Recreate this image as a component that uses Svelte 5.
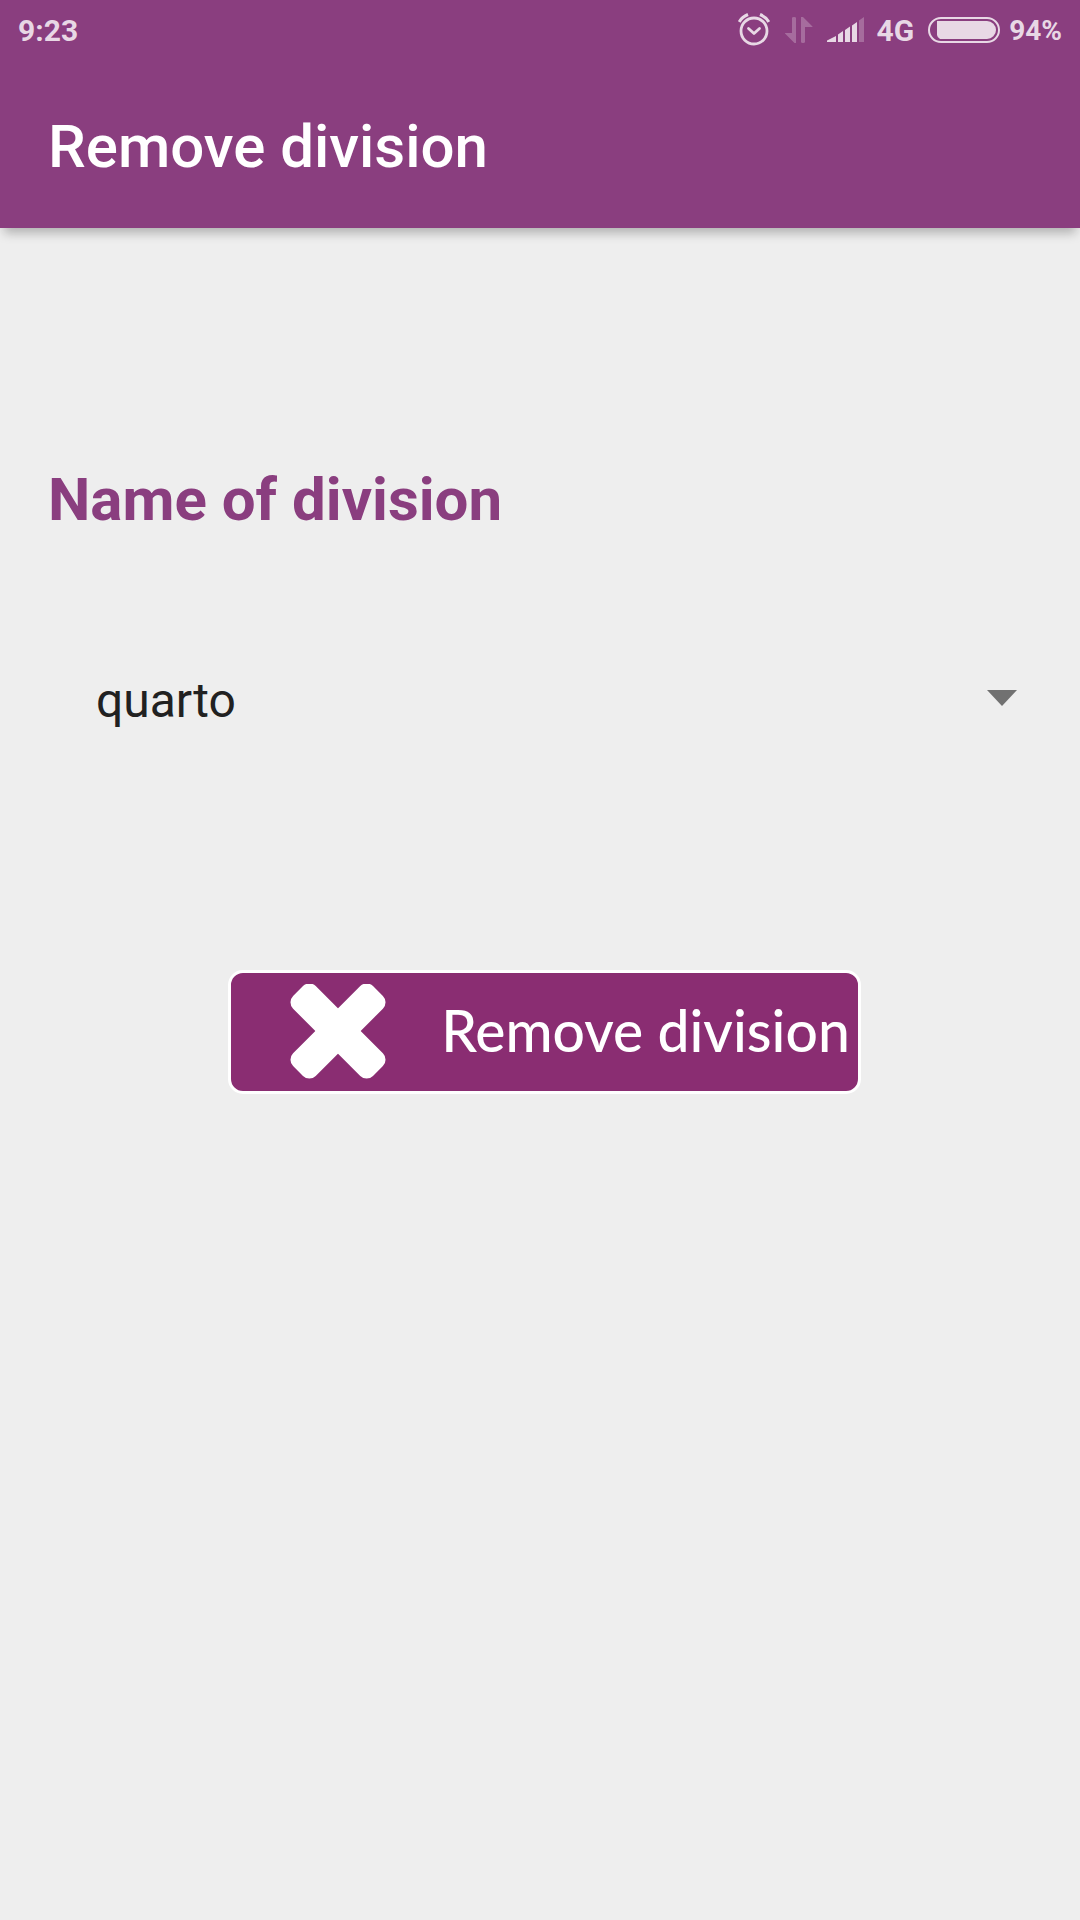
<script>
  let divisions = $state(['quarto']);
  let selected = $state('quarto');

  function removeDivision() {
    divisions = divisions.filter((name) => name !== selected);
    selected = divisions[0] ?? '';
  }
</script>

<div class="screen">
  <header>
    <div class="status">
      <span class="time">9:23</span>
      <div class="indicators">
        <svg class="alarm" width="32" height="34" viewBox="0 0 32 34" fill="none" stroke="currentColor" aria-hidden="true">
          <circle cx="16" cy="18" r="13" stroke-width="2.8" />
          <path d="M10.500 15.500L16 20.500L21.500 15.500" stroke-width="2.8" stroke-linecap="round" stroke-linejoin="round" />
          <path d="M1.200 9Q4 4 10 1.600M30.800 9Q28 4 22 1.600" stroke-width="3.200" />
        </svg>
        <svg class="data" width="28" height="28" viewBox="0 0 28 28" fill="currentColor" aria-hidden="true">
          <path d="M7 2Q7 1 9 1T11 2V27H9.500L0 17.500V17H7ZM16 1H18L27.500 10.500V11H20V26Q20 27 18 27T16 26Z" />
        </svg>
        <svg class="signal" width="38" height="26" viewBox="0 0 38 26" fill="currentColor" aria-hidden="true">
          <path d="M0 25V23.500L9 19V25ZM11 17.500L16 14V25H11ZM18 13L23 9.500V25H18ZM25 8.500L30 5V25H25Z" />
          <path d="M32 3.500L37 0V25H32Z" opacity=".3" />
        </svg>
        <span class="network">4G</span>
        <svg class="battery" width="72" height="26" viewBox="0 0 72 26" aria-hidden="true">
          <rect x="1" y="1" width="70" height="24" rx="12" fill="none" stroke="currentColor" stroke-width="2" />
          <path d="M9 4H59A9 9 0 0 1 59 22H12Q9 20 9 18Z" fill="currentColor" />
        </svg>
        <span class="percent">94%</span>
      </div>
    </div>
    <h1>Remove division</h1>
  </header>

  <main>
    <label for="division">Name of division</label>
    <div class="picker">
      <select id="division" bind:value={selected}>
        {#each divisions as name}
          <option value={name}>{name}</option>
        {/each}
      </select>
      <svg width="30" height="16" viewBox="0 0 30 16" aria-hidden="true">
        <path d="M0 0H30L15 16Z" fill="#717171" />
      </svg>
    </div>
    <div class="actions">
      <button type="button" onclick={removeDivision}>
        <svg width="96" height="96" viewBox="0 0 96 96" fill="#fff" aria-hidden="true">
          <g transform="translate(0 -1) rotate(45 48 48)">
            <rect x="-8.500" y="32" width="113" height="32" rx="9" />
            <rect x="32" y="-8.500" width="32" height="113" rx="9" />
          </g>
        </svg>
        <span>Remove division</span>
      </button>
    </div>
  </main>
</div>

<style>
  :global(body) {
    margin: 0;
    background: #eee;
  }

  .screen {
    min-height: 100vh;
    background: #eee;
    font-family: Roboto, "Liberation Sans", sans-serif;
  }

  header {
    background: #8a3e7f;
    box-shadow: 0 9px 10px -4px rgba(0, 0, 0, 0.26);
  }

  .status {
    display: flex;
    justify-content: space-between;
    align-items: center;
    height: 60px;
    padding: 0 18px;
    color: #e8d8e5;
    font-size: 30px;
    font-weight: 700;
    line-height: 58px;
  }

  .status span {
    padding-top: 2px;
  }

  .indicators {
    display: flex;
    align-items: center;
  }

  .data {
    margin-left: 15px;
    opacity: 0.3;
  }

  .signal {
    margin-left: 14px;
  }

  .network {
    margin-left: 12px;
  }

  .battery {
    margin: 0 9px 0 14px;
  }

  .percent {
    font-size: 28px;
  }

  h1 {
    margin: 0;
    padding: 51px 48px 45px;
    color: #fff;
    font-size: 60px;
    font-weight: 500;
    line-height: 72px;
  }

  main {
    display: flex;
    flex-direction: column;
    padding: 236px 48px 48px;
  }

  label {
    color: #8a3e7f;
    font-size: 60px;
    font-weight: 700;
    line-height: 72px;
  }

  .picker {
    display: grid;
    align-items: center;
    margin-top: 114px;
  }

  .picker select,
  .picker svg {
    grid-area: 1 / 1;
  }

  .picker svg {
    justify-self: end;
    margin-right: 15px;
    pointer-events: none;
  }

  select {
    appearance: none;
    width: 100%;
    height: 96px;
    padding: 6px 48px 0;
    border: 0;
    background: transparent;
    color: #212121;
    font: 400 48px/90px Roboto, "Liberation Sans", sans-serif;
  }

  .actions {
    display: flex;
    justify-content: center;
    margin-top: 224px;
    padding-left: 9px;
  }

  button {
    display: flex;
    align-items: center;
    gap: 55px;
    height: 124px;
    padding: 0 8px 0 59px;
    border: 3px solid #fff;
    border-radius: 15px;
    background: #8a2d72;
    color: #fff;
    font: 500 57px/72px Lato, "Liberation Sans", sans-serif;
    white-space: nowrap;
  }

  button span {
    padding-bottom: 4px;
  }
</style>
